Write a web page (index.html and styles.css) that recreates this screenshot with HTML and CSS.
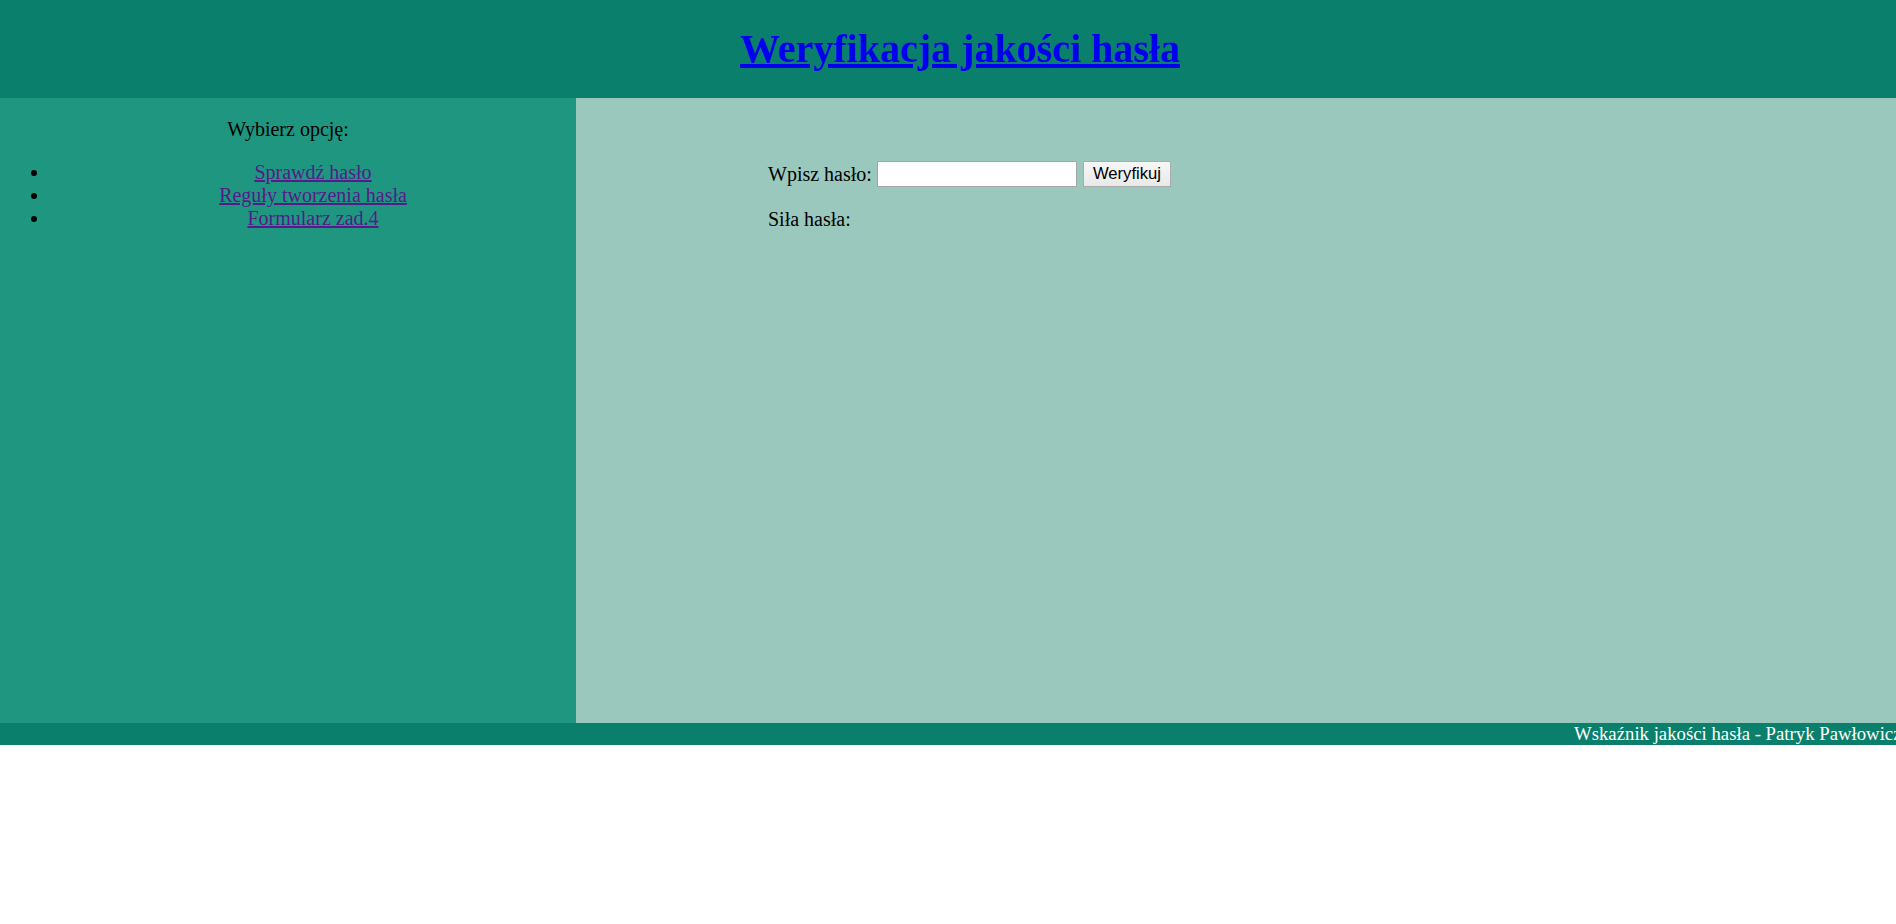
FILE: index.html
```html
<!DOCTYPE html>
<html lang="pl">
<head>
<meta charset="utf-8">
<title>Weryfikacja jakości hasła</title>
<link rel="stylesheet" href="styles.css">
</head>
<body>
<header class="top">
  <h1 class="title"><a class="title-link" href="#">Weryfikacja jakości hasła</a></h1>
</header>
<div class="content">
  <aside class="side">
    <p class="side-head">Wybierz opcję:</p>
    <ul class="menu">
      <li><a class="menu-link" href="#">Sprawdź hasło</a></li>
      <li><a class="menu-link" href="#">Reguły tworzenia hasła</a></li>
      <li><a class="menu-link" href="#">Formularz zad.4</a></li>
    </ul>
  </aside>
  <main class="main">
    <div class="form-row">
      <span class="label">Wpisz hasło:</span>
      <input class="pass" type="text">
      <button class="btn" type="button">Weryfikuj</button>
    </div>
    <p class="strength">Siła hasła:</p>
  </main>
</div>
<footer class="foot">
  <div class="foot-text">Wskaźnik jakości hasła - Patryk Pawłowicz</div>
</footer>
</body>
</html>
```

FILE: styles.css
```css
html, body {
  margin: 0;
  padding: 0;
  background: #ffffff;
}
body {
  font-family: "Liberation Serif", "Times New Roman", serif;
  font-size: 20px;
  line-height: 23px;
  color: #000;
}
.top {
  background: #0a806c;
  height: 98px;
  box-sizing: border-box;
  padding: 26px 0 0 24px;
  text-align: center;
}
.title {
  margin: 0;
  font-size: 40px;
  line-height: 46px;
  font-weight: bold;
}
.title-link {
  color: #0000ee;
  text-decoration: underline;
}
.content {
  display: flex;
  height: 625px;
}
.side {
  width: 576px;
  flex: none;
  background: #1f967f;
  text-align: center;
}
.side-head {
  margin: 20px 0;
}
.menu {
  margin: 20px 0;
  padding-left: 50px;
}
.menu-link {
  color: #551a8b;
}
.main {
  flex: 1;
  background: #9bc8bd;
  padding: 63px 0 0 192px;
}
.form-row {
  display: flex;
  align-items: center;
  gap: 5px;
  height: 26px;
}
.pass {
  box-sizing: border-box;
  width: 200px;
  height: 26px;
  margin: 0;
  border: 1px solid #a6a6a6;
  background: #fff;
  font-family: "Liberation Sans", Arial, sans-serif;
  font-size: 16.67px;
  padding: 1px 2px;
}
.btn {
  box-sizing: border-box;
  height: 26px;
  margin: 0 0 0 1px;
  padding: 0 9px;
  border: 1px solid #ababab;
  border-radius: 0;
  background: linear-gradient(#f7f7f7, #e9e9e9);
  font-family: "Liberation Sans", Arial, sans-serif;
  font-size: 16.67px;
  color: #000;
}
.strength {
  margin: 21px 0 0;
}
.foot {
  background: #0a806c;
  height: 22px;
  overflow: hidden;
}
.foot-text {
  padding-left: 1574px;
  white-space: nowrap;
  color: #ffffff;
  font-size: 18.75px;
  line-height: 22px;
}
```
